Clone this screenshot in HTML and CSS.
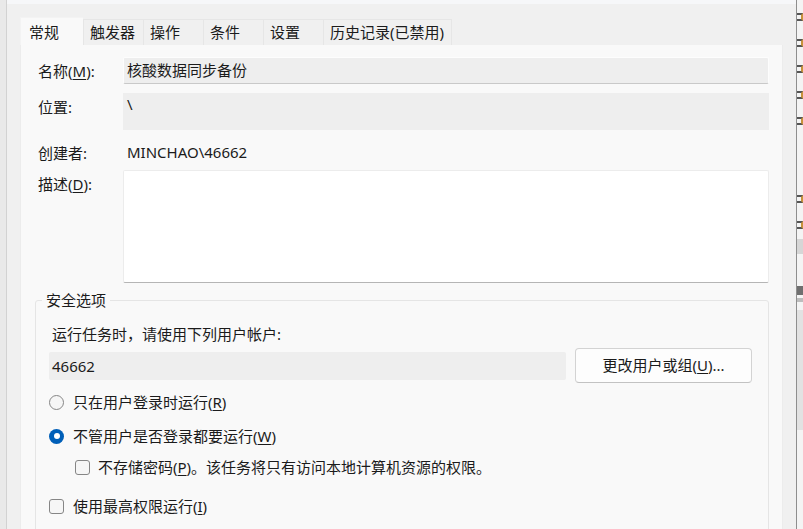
FILE: index.html
```html
<!DOCTYPE html>
<html lang="zh-CN">
<head>
<meta charset="utf-8">
<title>常规</title>
<link rel="stylesheet" href="styles.css">
</head>
<body>
<div class="frame">
  <div class="left-edge"></div>
  <div class="main">
    <div class="tabs">
      <div class="tab active">常规</div>
      <div class="tab">触发器</div>
      <div class="tab">操作</div>
      <div class="tab">条件</div>
      <div class="tab">设置</div>
      <div class="tab last">历史记录(已禁用)</div>
    </div>
    <div class="panel">
      <div class="form">
        <div class="label">名称(<u>M</u>):</div>
        <div class="field name-field">核酸数据同步备份</div>

        <div class="label">位置:</div>
        <div class="field loc-field">\</div>

        <div class="label">创建者:</div>
        <div class="value">MINCHAO\46662</div>

        <div class="label">描述(<u>D</u>):</div>
        <div class="desc-field"></div>
      </div>

      <fieldset class="group">
        <legend>安全选项</legend>
        <div class="hint">运行任务时，请使用下列用户帐户:</div>
        <div class="account-row">
          <div class="account">46662</div>
          <div class="btn">更改用户或组(<u>U</u>)...</div>
        </div>
        <div class="opt opt-r1"><span class="radio"></span><span>只在用户登录时运行(<u>R</u>)</span></div>
        <div class="opt opt-r2"><span class="radio checked"></span><span>不管用户是否登录都要运行(<u>W</u>)</span></div>
        <div class="opt opt-c1 indent"><span class="check"></span><span>不存储密码(<u>P</u>)。该任务将只有访问本地计算机资源的权限。</span></div>
        <div class="opt opt-c2"><span class="check"></span><span>使用最高权限运行(<u>I</u>)</span></div>
      </fieldset>
    </div>
  </div>
  <div class="right-edge">
    <span class="ico i1"></span>
    <span class="ico"></span>
    <span class="ico"></span>
    <span class="ico"></span>
    <span class="ico"></span>
    <span class="ico gap"></span>
    <span class="ico"></span>
    <span class="band b1"></span>
    <span class="band b2"></span>
    <span class="band b3"></span>
    <span class="band b4"></span>
  </div>
</div>
</body>
</html>
```

FILE: styles.css
```css
* { box-sizing: border-box; }
html, body {
  margin: 0;
  padding: 0;
  width: 803px;
  height: 529px;
  overflow: hidden;
  background: #f0f0f0;
  font-family: "Noto Sans", "Noto Sans CJK SC", sans-serif;
  font-size: 15px;
  color: #1b1b1b;
}
u { text-decoration: underline; text-underline-offset: 2px; text-decoration-thickness: 1px; }

.frame { display: flex; height: 529px; overflow: hidden; }

.left-edge {
  width: 7px;
  background: #e9e9e9;
  border-right: 1px solid #d2d2d2;
}

.main {
  flex: 1;
  display: flex;
  flex-direction: column;
  border-top: 4px solid #f6f7f9;
  padding: 13px 13px 0 13px;
  min-width: 0;
  min-height: 0;
  overflow: hidden;
}

.tabs {
  display: flex;
  align-items: flex-end;
  height: 28px;
  flex: none;
}
.tab {
  height: 26px;
  line-height: 25px;
  min-width: 60px;
  padding: 0 6px 0 6px;
  background: #f0f0f0;
  border-top: 1px solid #e6e6e6;
  border-left: 1px solid #e6e6e6;
  white-space: nowrap;
}
.tab.last { border-right: 1px solid #e6e6e6; padding-right: 7px; }
.tab.active {
  height: 28px;
  line-height: 29px;
  min-width: 63px;
  padding-left: 8px;
  background: #f9f9f9;
  border-color: #f3f3f3;
}

.panel {
  flex: 1;
  min-height: 0;
  overflow: hidden;
  background: #f9f9f9;
  border-left: 1px solid #ececec;
  border-right: 1px solid #ececec;
  padding: 12px 13px 0 14px;
}

.form {
  display: grid;
  grid-template-columns: 85px 1fr;
  grid-template-rows: 27px 37px 22px 113px;
  row-gap: 9px;
  margin-left: 3px;
}
.label {
  line-height: 20px;
  padding-top: 4px;
  white-space: nowrap;
}
.field {
  background: #eeeeee;
  line-height: 20px;
  padding-left: 4px;
}
.name-field {
  border: 1px solid #fdfdfd;
  border-bottom: 1px solid #c9c9c9;
  border-radius: 2px;
  padding-top: 2px;
  padding-left: 3px;
}
.loc-field { padding-top: 1px; }
.value {
  line-height: 20px;
  padding: 3px 0 0 4px;
}
.desc-field {
  background: #ffffff;
  border: 1px solid #ececec;
  border-bottom: 1px solid #b5b5b5;
  border-radius: 2px;
}

.group {
  margin: 7px 0 0 0;
  border: 1px solid #e5e5e5;
  border-radius: 3px;
  padding: 14px 16px 40px 13px;
  min-width: 0;
}
.group legend {
  line-height: 20px;
  padding: 0 4px;
  margin-left: -7px;
}
.hint {
  line-height: 20px;
  padding-left: 3px;
}
.account-row {
  display: flex;
  align-items: center;
  gap: 9px;
  margin-top: 4px;
  height: 35px;
}
.account {
  width: 518px;
  height: 28px;
  background: #eeeeee;
  border-radius: 2px;
  line-height: 28px;
  padding-left: 3px;
}
.btn {
  width: 177px;
  height: 35px;
  background: #fdfdfd;
  border: 1px solid #d3d3d3;
  border-bottom-color: #c2c2c2;
  border-radius: 4px;
  line-height: 33px;
  text-align: center;
}

.opt {
  display: flex;
  align-items: center;
  gap: 9px;
  line-height: 20px;
  height: 20px;
}
.opt-r1 { margin-top: 9px; }
.opt-r2 { margin-top: 14px; }
.opt-c1 { margin-top: 11px; }
.opt-c2 { margin-top: 19px; }
.indent { padding-left: 26px; gap: 8px; }

.radio {
  width: 15px;
  height: 15px;
  border-radius: 50%;
  border: 1px solid #868686;
  background: #f6f6f6;
  flex: none;
}
.radio.checked {
  border: none;
  background: #005fb8;
  position: relative;
}
.radio.checked::after {
  content: "";
  position: absolute;
  left: 4.5px;
  top: 4.5px;
  width: 6px;
  height: 6px;
  border-radius: 50%;
  background: #ffffff;
}
.check {
  width: 15px;
  height: 15px;
  border-radius: 3px;
  border: 1px solid #868686;
  background: #f6f6f6;
  flex: none;
}

.right-edge {
  width: 7px;
  background: #f4f4f4;
  border-left: 1px solid #8e8e8e;
  display: flex;
  flex-direction: column;
  align-items: flex-start;
}
.ico {
  display: block;
  width: 6px;
  height: 8px;
  margin-top: 18px;
  border-top: 2px solid #555;
  border-bottom: 2px solid #555;
  border-right: 2px solid #c8923a;
}
.ico.i1 { margin-top: 13px; }
.ico.gap { margin-top: 70px; }
.band { display: block; width: 6px; }
.band.b1 { margin-top: 10px; height: 15px; background: #d6d6d6; }
.band.b2 { margin-top: 32px; height: 9px; background: #6f6f6f; }
.band.b3 { margin-top: 3px; height: 4px; background: #bdbdbd; }
.band.b4 { margin-top: 8px; height: 120px; background: #e2e2e2; }
```
